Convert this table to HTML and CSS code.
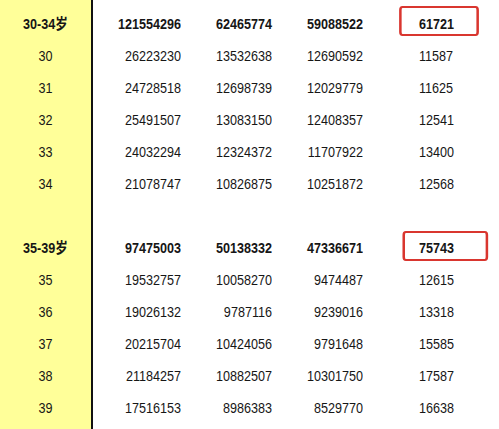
FILE: index.html
```html
<!DOCTYPE html>
<html>
<head>
<meta charset="utf-8">
<link rel="stylesheet" href="styles.css">
</head>
<body>
<div class="sheet">
  <div class="row group"><div class="age">30-34岁</div><div class="n">121554296</div><div class="n">62465774</div><div class="n">59088522</div><div class="last"><span class="hl hl-a">61721</span></div></div>
  <div class="row"><div class="age">30</div><div class="n">26223230</div><div class="n">13532638</div><div class="n">12690592</div><div class="last">11587</div></div>
  <div class="row"><div class="age">31</div><div class="n">24728518</div><div class="n">12698739</div><div class="n">12029779</div><div class="last">11625</div></div>
  <div class="row"><div class="age">32</div><div class="n">25491507</div><div class="n">13083150</div><div class="n">12408357</div><div class="last">12541</div></div>
  <div class="row"><div class="age">33</div><div class="n">24032294</div><div class="n">12324372</div><div class="n">11707922</div><div class="last">13400</div></div>
  <div class="row"><div class="age">34</div><div class="n">21078747</div><div class="n">10826875</div><div class="n">10251872</div><div class="last">12568</div></div>
  <div class="row blank"><div class="age"></div><div class="n"></div><div class="n"></div><div class="n"></div><div class="last"></div></div>
  <div class="row group"><div class="age">35-39岁</div><div class="n">97475003</div><div class="n">50138332</div><div class="n">47336671</div><div class="last"><span class="hl hl-b">75743</span></div></div>
  <div class="row"><div class="age">35</div><div class="n">19532757</div><div class="n">10058270</div><div class="n">9474487</div><div class="last">12615</div></div>
  <div class="row"><div class="age">36</div><div class="n">19026132</div><div class="n">9787116</div><div class="n">9239016</div><div class="last">13318</div></div>
  <div class="row"><div class="age">37</div><div class="n">20215704</div><div class="n">10424056</div><div class="n">9791648</div><div class="last">15585</div></div>
  <div class="row"><div class="age">38</div><div class="n">21184257</div><div class="n">10882507</div><div class="n">10301750</div><div class="last">17587</div></div>
  <div class="row"><div class="age">39</div><div class="n">17516153</div><div class="n">8986383</div><div class="n">8529770</div><div class="last">16638</div></div>
</div>
</body>
</html>
```
FILE: styles.css
```css
html, body {
  margin: 0;
  padding: 0;
  background: #fff;
}
.sheet {
  width: 499px;
  height: 429px;
  box-sizing: border-box;
  padding-top: 8px;
  overflow: hidden;
  background: linear-gradient(to right, #ffff99 0, #ffff99 91px, #111 91px, #111 93px, #fff 93px);
  font-family: "Liberation Sans", Arial, "Noto Sans CJK SC", sans-serif;
  font-size: 15px;
  color: #161616;
}
.row {
  display: grid;
  grid-template-columns: 91px 90px 91px 91px 1fr;
  height: 32px;
  line-height: 32px;
}
/* The source capture shows condensed (~84% width) Arial text */
.row > div {
  transform: scaleX(0.84);
}
.group {
  font-weight: bold;
}
.age {
  text-align: center;
  transform-origin: 50% 50%;
}
.n {
  text-align: right;
  transform-origin: 100% 50%;
}
.row > .last {
  padding-left: 66.7px;
  transform-origin: 0 50%;
  white-space: nowrap;
}
.hl {
  display: inline-block;
  position: relative;
}
.hl::after {
  content: "";
  position: absolute;
  border: 2.5px solid #d9362f;
  border-left-width: 3px;
  border-right-width: 3px;
  border-radius: 4px;
}
.hl-a::after {
  top: -2px;
  bottom: 4px;
  left: -23.8px;
  right: -29.8px;
}
.hl-b::after {
  top: -1px;
  bottom: 3px;
  left: -20.2px;
  right: -40.5px;
}
```
